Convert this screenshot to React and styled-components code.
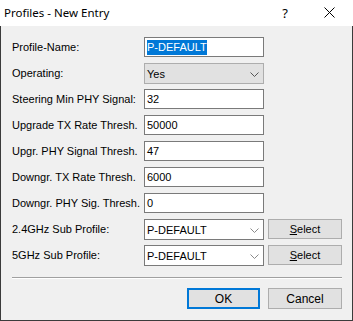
import React from 'react';
import styled, { createGlobalStyle } from 'styled-components';

const Global = createGlobalStyle`
    html, body {
        margin: 0;
        padding: 0;
        background: #ffffff;
    }
    * {
        box-sizing: border-box;
    }
`

const rows = [
    { label: 'Profile-Name:', kind: 'text', value: 'P-DEFAULT', selected: true },
    { label: 'Operating:', kind: 'combo', value: 'Yes', grey: true },
    { label: 'Steering Min PHY Signal:', kind: 'text', value: '32' },
    { label: 'Upgrade TX Rate Thresh.', kind: 'text', value: '50000' },
    { label: 'Upgr. PHY Signal Thresh.', kind: 'text', value: '47' },
    { label: 'Downgr. TX Rate Thresh.', kind: 'text', value: '6000' },
    { label: 'Downgr. PHY Sig. Thresh.', kind: 'text', value: '0' },
    { label: '2.4GHz Sub Profile:', kind: 'combo', value: 'P-DEFAULT', select: true },
    { label: '5GHz Sub Profile:', kind: 'combo', value: 'P-DEFAULT', select: true },
]

const Chevron = ({ color }) => (
    <svg width="9" height="5" viewBox="0 0 9 5">
        <path d="M0.5 0.5 L4.5 4.5 L8.5 0.5" fill="none" stroke={color} strokeWidth="1" />
    </svg>
)

const App = () => {
    return (
        <>
            <Global />
            <Window>
                <TitleBar>
                    <Title>Profiles - New Entry</Title>
                    <TitleButtons>
                        <Help>?</Help>
                        <Close>
                            <svg width="11" height="11" viewBox="0 0 11 11">
                                <path d="M0.5 0.5 L10.5 10.5 M10.5 0.5 L0.5 10.5" stroke="#000" strokeWidth="1" />
                            </svg>
                        </Close>
                    </TitleButtons>
                </TitleBar>
                <Body>
                    <Form>
                        {rows.map((row) => (
                            <Row key={row.label}>
                                <Label>{row.label}</Label>
                                {row.kind === 'text' ? (
                                    <TextBox>
                                        {row.selected ? <Selection>{row.value}</Selection> : row.value}
                                    </TextBox>
                                ) : (
                                    <Combo $grey={row.grey}>
                                        <span>{row.value}</span>
                                        <Chevron color={row.grey ? '#555555' : '#8a8a8a'} />
                                    </Combo>
                                )}
                                {row.select && (
                                    <SideButton><u>S</u>elect</SideButton>
                                )}
                            </Row>
                        ))}
                    </Form>
                    <Separator />
                    <Footer>
                        <Button $default>OK</Button>
                        <Button>Cancel</Button>
                    </Footer>
                </Body>
            </Window>
        </>
    )
}

export default App;

const Window = styled.div`
    width: 353px;
    height: 321px;
    display: flex;
    flex-direction: column;
    font-family: "Liberation Sans", Arial, sans-serif;
    font-size: 11px;
    color: #000;
`

const TitleBar = styled.div`
    height: 26px;
    flex-shrink: 0;
    background: #ffffff;
    display: flex;
    align-items: center;
    justify-content: space-between;
    padding-left: 4px;
`

const Title = styled.div`
    font-family: "Noto Sans", "Open Sans", sans-serif;
    font-size: 11.5px;
    padding-bottom: 1px;
`

const TitleButtons = styled.div`
    display: flex;
    align-items: center;
    height: 100%;
`

const Help = styled.div`
    font-family: "Noto Sans", sans-serif;
    font-size: 13px;
    width: 41px;
    text-align: center;
    padding-right: 3px;
    padding-bottom: 1px;
`

const Close = styled.div`
    width: 46px;
    display: flex;
    justify-content: center;
    align-items: center;
    padding-right: 2px;
    padding-bottom: 1px;
`

const Body = styled.div`
    flex: 1;
    background: #f0f0f0;
    border: 1px solid #3b3b3b;
    border-top: none;
    padding: 11px 10px 0 11px;
    display: flex;
    flex-direction: column;
`

const Form = styled.div`
    display: flex;
    flex-direction: column;
    gap: 6px;
`

const Row = styled.div`
    height: 20px;
    display: flex;
    align-items: flex-start;
`

const Label = styled.div`
    width: 132px;
    height: 20px;
    line-height: 20px;
    white-space: nowrap;
`

const TextBox = styled.div`
    width: 120px;
    height: 20px;
    background: #ffffff;
    border: 1px solid #7a7a7a;
    padding: 0 2px;
    line-height: 18px;
    white-space: nowrap;
`

const Selection = styled.span`
    display: inline-block;
    background: #0078d7;
    color: #ffffff;
    line-height: 15px;
    height: 15px;
    vertical-align: middle;
    margin-top: -2px;
`

const Combo = styled.div`
    width: 120px;
    height: 21px;
    background: ${({ $grey }) => ($grey ? '#e1e1e1' : '#ffffff')};
    border: 1px solid ${({ $grey }) => ($grey ? '#adadad' : '#7a7a7a')};
    padding: 0 4px 0 2px;
    display: flex;
    align-items: center;
    justify-content: space-between;
    white-space: nowrap;
    svg {
        margin-top: 1px;
    }
`

const SideButton = styled.div`
    margin-left: 4px;
    width: 74px;
    height: 20px;
    background: #e1e1e1;
    border: 1px solid #adadad;
    display: flex;
    align-items: center;
    justify-content: center;
`

const Separator = styled.div`
    margin-top: 12px;
    height: 2px;
    border-top: 1px solid #a0a0a0;
    border-bottom: 1px solid #ffffff;
`

const Footer = styled.div`
    margin-top: 9px;
    display: flex;
    justify-content: flex-end;
    gap: 8px;
`

const Button = styled.div`
    width: ${({ $default }) => ($default ? '73px' : '74px')};
    height: 21px;
    background: #e1e1e1;
    border: ${({ $default }) => ($default ? '2px solid #0078d7' : '1px solid #adadad')};
    display: flex;
    align-items: center;
    justify-content: center;
    font-size: 12px;
`
